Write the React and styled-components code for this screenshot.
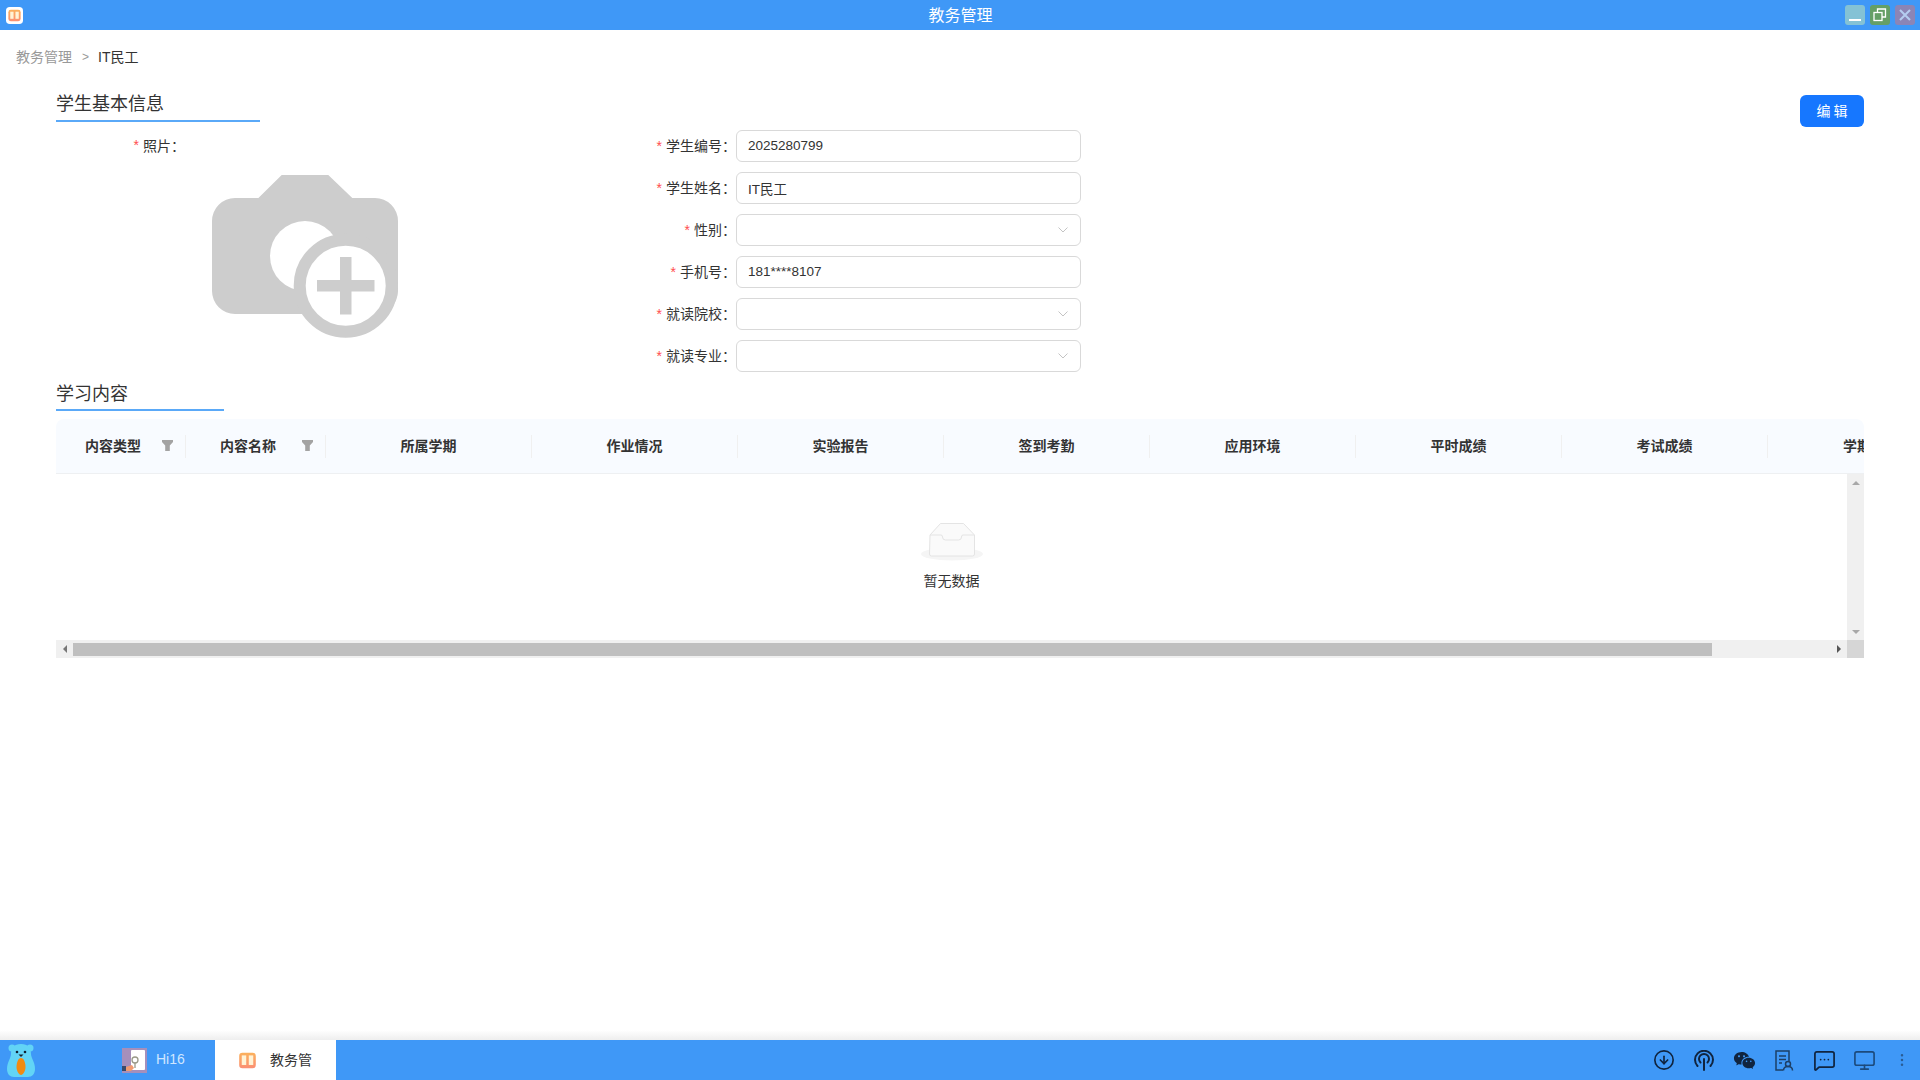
import React from 'react';
import styled, { createGlobalStyle } from 'styled-components';
import { CircleArrowDown, MessageSquareMore, Monitor, EllipsisVertical } from 'lucide-react';
import { RiWechatFill } from 'react-icons/ri';

const GlobalStyle = createGlobalStyle`
  html, body { margin: 0; padding: 0; height: 100%; background: #fff; }
  body { font-family: "Liberation Sans", "Noto Sans CJK SC", sans-serif; font-size: 14px; color: #333; }
  * { box-sizing: border-box; }
`;

const Page = styled.div`
  width: 1920px;
  height: 1080px;
  display: flex;
  flex-direction: column;
  overflow: hidden;
`;

const TitleBar = styled.header`
  height: 30px;
  flex: none;
  display: grid;
  grid-template-columns: 1fr auto 1fr;
  align-items: center;
  padding: 0 5px 0 6px;
  background: #3f98f7;
`;

const TitleText = styled.div`
  color: #fff;
  font-size: 16px;
  padding-bottom: 2px;
`;

const WindowButtons = styled.div`
  display: flex;
  justify-content: flex-end;
  gap: 5px;
`;

const WindowButton = styled.div`
  width: 20px;
  height: 20px;
  border-radius: 3px;
  background: ${(p) => p.$color};
  display: flex;
  align-items: center;
  justify-content: center;
`;

const Main = styled.main`
  flex: 1;
  min-height: 0;
  padding: 0 56px;
`;

const Breadcrumb = styled.nav`
  height: 54px;
  margin-left: -40px;
  display: flex;
  align-items: center;
  color: #999;
  line-height: 1;
`;

const Crumb = styled.span`
  color: ${(p) => (p.$current ? '#333' : '#999')};
`;

const CrumbSep = styled.span`
  margin: 0 9px 0 10px;
  font-size: 12px;
`;

const SectionHead = styled.div`
  height: 38px;
  display: flex;
  justify-content: space-between;
  align-items: flex-start;
`;

const SectionTitle = styled.h2`
  width: ${(p) => p.$width}px;
  height: 38px;
  margin: 0;
  padding-top: ${(p) => p.$top}px;
  font-size: 18px;
  font-weight: 400;
  line-height: 26px;
  color: #333;
  border-bottom: 2px solid #5aa9f8;
`;

const EditButton = styled.button`
  width: 64px;
  height: 32px;
  margin-top: 11px;
  padding: 0 0 2px;
  border: 0;
  border-radius: 6px;
  background: #1677ff;
  color: #fff;
  font: inherit;
  letter-spacing: 3px;
  text-indent: 3px;
`;

const FormArea = styled.div`
  display: flex;
  height: 251px;
  padding-top: 8px;
`;

const PhotoColumn = styled.div`
  width: 500px;
  flex: none;
`;

const PhotoLabel = styled.div`
  width: 129px;
  height: 32px;
  padding-bottom: 2px;
  display: flex;
  align-items: center;
  justify-content: flex-end;
`;

const PhotoIcon = styled.svg`
  display: block;
  width: 190px;
  height: 165px;
  margin: 13px 0 0 156px;
`;

const Fields = styled.div`
  display: flex;
  flex-direction: column;
  gap: 10px;
`;

const FieldRow = styled.div`
  display: flex;
  align-items: center;
`;

const FieldLabel = styled.label`
  width: 180px;
  padding-bottom: 2px;
  text-align: right;
`;

const Star = styled.span`
  color: #ff4d4f;
  margin-right: 4px;
  font-size: 14px;
`;

const TextInput = styled.input`
  width: 345px;
  height: 32px;
  padding: 0 11px 1px;
  border: 1px solid #d9d9d9;
  border-radius: 6px;
  outline: none;
  background: #fff;
  color: #333;
  font: inherit;
  font-size: 13.5px;
`;

const SelectBox = styled.div`
  width: 345px;
  height: 32px;
  padding: 0 12px;
  display: flex;
  align-items: center;
  justify-content: flex-end;
  border: 1px solid #d9d9d9;
  border-radius: 6px;
`;

const Table = styled.section`
  margin-top: 8px;
  width: 1808px;
`;

const HeaderRow = styled.div`
  height: 55px;
  display: flex;
  align-items: center;
  overflow: hidden;
  background: #f8fbff;
  border-bottom: 1px solid #eef0f2;
  border-radius: 8px 8px 0 0;
`;

const HeaderCell = styled.div`
  flex: none;
  width: ${(p) => p.$width}px;
  height: 23px;
  display: flex;
  align-items: center;
  justify-content: ${(p) => (p.$filter ? 'space-between' : 'center')};
  padding: ${(p) => (p.$filter ? `0 12px 2px ${p.$pad}px` : '0 0 2px')};
  font-weight: 600;
  color: #333;
  border-right: ${(p) => (p.$last ? '0' : '1px solid #f0f0f0')};
  white-space: nowrap;
`;

const FilterGlyph = styled.svg`
  width: 11px;
  height: 11px;
  margin-top: 1px;
  flex: none;
`;

const BodyRow = styled.div`
  display: flex;
  height: 166px;
`;

const EmptyArea = styled.div`
  flex: 1;
  display: flex;
  flex-direction: column;
  align-items: center;
  padding-top: 46px;
`;

const EmptyText = styled.div`
  margin-top: 10px;
  line-height: 20px;
  color: #333;
`;

const VScroll = styled.div`
  width: 17px;
  display: flex;
  flex-direction: column;
  justify-content: space-between;
  align-items: center;
  padding: 5px 0 4px;
  background: #f0f0f0;
`;

const HScroll = styled.div`
  height: 18px;
  display: flex;
  align-items: center;
  background: #f0f0f0;
`;

const ArrowSlot = styled.div`
  width: ${(p) => p.$width}px;
  flex: none;
  display: flex;
  justify-content: center;
`;

const Thumb = styled.div`
  width: 1639px;
  height: 13px;
  flex: none;
  background: #bfbfbf;
`;

const HTrack = styled.div`
  flex: 1;
`;

const Corner = styled.div`
  width: 17px;
  height: 18px;
  flex: none;
  background: #d6d6d6;
`;

const TopFade = styled.div`
  height: 10px;
  flex: none;
  background: linear-gradient(#fff, #eeeeee);
`;

const TaskBar = styled.footer`
  height: 40px;
  flex: none;
  display: flex;
  align-items: center;
  background: #3f98f7;
`;

const Mascot = styled.svg`
  width: 28px;
  height: 33px;
  margin-left: 7px;
  flex: none;
`;

const Task = styled.div`
  height: 40px;
  flex: none;
  display: flex;
  align-items: center;
  background: ${(p) => (p.$active ? '#fff' : 'transparent')};
  color: ${(p) => (p.$active ? '#333' : '#cfe6ff')};
  width: ${(p) => p.$width}px;
  padding-left: ${(p) => p.$pad}px;
`;

const TaskLabel = styled.span`
  margin-left: ${(p) => p.$gap}px;
  padding-bottom: 2px;
  font-size: 14px;
`;

const Tray = styled.div`
  margin-left: auto;
  display: flex;
  align-items: center;
  color: #10243f;
`;

const TraySlot = styled.div`
  width: 40px;
  display: flex;
  justify-content: center;
  color: ${(p) => p.$color || 'inherit'};
`;

const MoreSlot = styled.div`
  width: 36px;
  display: flex;
  justify-content: center;
  color: #2a5c94;
`;

const columns = ['所属学期', '作业情况', '实验报告', '签到考勤', '应用环境', '平时成绩', '考试成绩'];

const FilterIcon = () => (
  <FilterGlyph viewBox="0 0 11 11">
    <path d="M0 0h11v2L7.800 5.500V11H3.200V5.500L0 2z" fill="#a3a3a3" />
  </FilterGlyph>
);

const AppIcon = ({ size }) => (
  <svg width={size} height={size} viewBox="0 0 18 18">
    <defs>
      <linearGradient id="appOrange" x1="0" y1="0" x2="0" y2="1">
        <stop offset="0" stopColor="#fbb15c" />
        <stop offset="1" stopColor="#fb8f73" />
      </linearGradient>
    </defs>
    <rect width="18" height="18" rx="4" fill="#fff" />
    <rect x="2.500" y="3" width="13" height="12" rx="2.500" fill="url(#appOrange)" />
    <rect x="4.500" y="5" width="3.500" height="7.500" fill="#fff3d6" />
    <rect x="10" y="5" width="3.500" height="7.500" fill="#fff3d6" />
  </svg>
);

const Required = ({ children }) => (
  <>
    <Star>*</Star>
    {children}：
  </>
);

const InputField = ({ label, value }) => (
  <FieldRow>
    <FieldLabel><Required>{label}</Required></FieldLabel>
    <TextInput value={value} readOnly />
  </FieldRow>
);

const SelectField = ({ label }) => (
  <FieldRow>
    <FieldLabel><Required>{label}</Required></FieldLabel>
    <SelectBox>
      <svg width="10" height="6" viewBox="0 0 10 6" fill="none" stroke="#c4c4c4" strokeWidth="1">
        <path d="M0.500 0.500L5 5l4.500-4.500" />
      </svg>
    </SelectBox>
  </FieldRow>
);

const Triangle = ({ d, color = '#a8a8a8' }) => (
  <svg width="8" height="8" viewBox="0 0 8 8"><path d={d} fill={color} /></svg>
);

export default function App() {
  return (
    <Page>
      <GlobalStyle />
      <TitleBar>
        <AppIcon size={17} />
        <TitleText>教务管理</TitleText>
        <WindowButtons>
          <WindowButton $color="#84c2d5">
            <svg width="14" height="14" viewBox="0 0 14 14"><path d="M1 12h12" stroke="#fff" strokeWidth="2" /></svg>
          </WindowButton>
          <WindowButton $color="#659f66">
            <svg width="14" height="14" viewBox="0 0 14 14" fill="none" stroke="#fff" strokeWidth="1.300">
              <rect x="1" y="4.500" width="8" height="8" />
              <path d="M4.500 4.500V1h8v8H9" />
            </svg>
          </WindowButton>
          <WindowButton $color="#8b85b6">
            <svg width="14" height="14" viewBox="0 0 14 14"><path d="M2 2l10 10M12 2L2 12" stroke="#b5cdf0" strokeWidth="2" /></svg>
          </WindowButton>
        </WindowButtons>
      </TitleBar>

      <Main>
        <Breadcrumb>
          <Crumb>教务管理</Crumb>
          <CrumbSep>&gt;</CrumbSep>
          <Crumb $current>IT民工</Crumb>
        </Breadcrumb>

        <SectionHead>
          <SectionTitle $width={204} $top={7}>学生基本信息</SectionTitle>
          <EditButton>编辑</EditButton>
        </SectionHead>

        <FormArea>
          <PhotoColumn>
            <PhotoLabel><Required>照片</Required></PhotoLabel>
            <PhotoIcon viewBox="212 175 190 165">
              <path
                d="M281.700 175h46.600l24 23h22.700a23 23 0 0 1 23 23v70a23 23 0 0 1-23 23H235a23 23 0 0 1-23-23v-70a23 23 0 0 1 23-23h23.400z"
                fill="#cdcdcd"
              />
              <circle cx="305" cy="256" r="35" fill="#fff" />
              <circle cx="345.700" cy="285.700" r="46" fill="#fff" stroke="#cdcdcd" strokeWidth="12" />
              <path d="M340 257h11.500v23h23v11.500h-23v23H340v-23h-23V280h23z" fill="#cdcdcd" />
            </PhotoIcon>
          </PhotoColumn>
          <Fields>
            <InputField label="学生编号" value="2025280799" />
            <InputField label="学生姓名" value="IT民工" />
            <SelectField label="性别" />
            <InputField label="手机号" value="181****8107" />
            <SelectField label="就读院校" />
            <SelectField label="就读专业" />
          </Fields>
        </FormArea>

        <SectionHead>
          <SectionTitle $width={168} $top={8}>学习内容</SectionTitle>
        </SectionHead>

        <Table>
          <HeaderRow>
            <HeaderCell $width={130} $filter $pad={29}>内容类型<FilterIcon /></HeaderCell>
            <HeaderCell $width={140} $filter $pad={34}>内容名称<FilterIcon /></HeaderCell>
            {columns.map((name) => (
              <HeaderCell key={name} $width={206}>{name}</HeaderCell>
            ))}
            <HeaderCell $width={206} $last>学期成绩</HeaderCell>
          </HeaderRow>
          <BodyRow>
            <EmptyArea>
              <svg width="64" height="41" viewBox="0 0 64 41">
                <ellipse cx="32" cy="34" rx="31" ry="6.500" fill="#f5f5f5" />
                <path
                  d="M10 15L20.500 3.500h23L54.500 15v19a2 2 0 0 1-2 2h-41a2 2 0 0 1-2-2z"
                  fill="#fafafa"
                  stroke="#e4e4e4"
                  strokeWidth="1"
                />
                <path d="M10 15h11q1.500 0 1.500 2 0 3 3 3h13q3 0 3-3 0-2 1.500-2h11" fill="none" stroke="#e4e4e4" strokeWidth="1" />
              </svg>
              <EmptyText>暂无数据</EmptyText>
            </EmptyArea>
            <VScroll>
              <Triangle d="M4 2l4 4H0z" />
              <Triangle d="M0 2h8L4 6z" />
            </VScroll>
          </BodyRow>
          <HScroll>
            <ArrowSlot $width={17}><Triangle d="M6 0v8L2 4z" color="#777" /></ArrowSlot>
            <Thumb />
            <HTrack />
            <ArrowSlot $width={17}><Triangle d="M2 0v8l4-4z" color="#555" /></ArrowSlot>
            <Corner />
          </HScroll>
        </Table>
      </Main>

      <TopFade />
      <TaskBar>
        <Mascot viewBox="0 0 28 33">
          <circle cx="5" cy="4" r="3.500" fill="#62d4f6" />
          <circle cx="23" cy="4" r="3.500" fill="#62d4f6" />
          <path d="M14 0c7 0 10 4 10 10 0 4 4 8 4 15 0 5-3 8-7 8H7c-4 0-7-3-7-8 0-7 4-11 4-15C4 4 7 0 14 0z" fill="#62d4f6" />
          <circle cx="10" cy="8" r="1.300" fill="#123" />
          <circle cx="18" cy="8" r="1.300" fill="#123" />
          <path d="M11.500 10.500h5L14 13z" fill="#123" />
          <path d="M14 14c3 0 4.500 5 4.500 9S16 31 14 31s-4.500-4-4.500-8 1.500-9 4.500-9z" fill="#f28a12" />
        </Mascot>
        <Task $width={180} $pad={87}>
          <svg width="25" height="25" viewBox="0 0 25 25">
            <rect width="25" height="25" fill="#a58fbb" />
            <rect x="9" y="2" width="14" height="20" rx="1" fill="#fff" />
            <circle cx="13" cy="12" r="3" fill="none" stroke="#998" strokeWidth="1.300" />
            <path d="M13 15v5" stroke="#998" strokeWidth="1.300" />
            <path d="M0 18h4v5H0z" fill="#3a4a6b" />
            <path d="M4 19l6-2 2 3-3 3H4z" fill="#f09a70" />
          </svg>
          <TaskLabel $gap={9}>Hi16</TaskLabel>
        </Task>
        <Task $active $width={121} $pad={21}>
          <AppIcon size={23} />
          <TaskLabel $gap={11}>教务管</TaskLabel>
        </Task>
        <Tray>
          <TraySlot><CircleArrowDown size={22} strokeWidth={1.800} /></TraySlot>
          <TraySlot>
            <svg width="20" height="21" viewBox="0 0 20 21" fill="none" stroke="currentColor" strokeWidth="2" strokeLinecap="round">
              <path d="M3.500 16a9 9 0 1 1 13 0" />
              <path d="M6.500 12.500a5 5 0 1 1 7 0" />
              <path d="M10 9v11" strokeWidth="2" />
            </svg>
          </TraySlot>
          <TraySlot><RiWechatFill size={23} /></TraySlot>
          <TraySlot $color="#1d3f66">
            <svg width="20" height="21" viewBox="0 0 20 21" fill="none" stroke="currentColor" strokeWidth="1.500">
              <path d="M9 20H2V1h13v10" />
              <path d="M5 6h7M5 9.500h7M5 13h3" />
              <circle cx="14" cy="14" r="2.500" />
              <path d="M9.500 20.500c0-3 2-4 4.500-4s4.500 1 4.500 4" />
            </svg>
          </TraySlot>
          <TraySlot><MessageSquareMore size={23} strokeWidth={1.800} /></TraySlot>
          <TraySlot $color="#1c4a7c">
            <Monitor size={23} strokeWidth={1.700} />
          </TraySlot>
          <MoreSlot><EllipsisVertical size={16} strokeWidth={1.800} /></MoreSlot>
        </Tray>
      </TaskBar>
    </Page>
  );
}
